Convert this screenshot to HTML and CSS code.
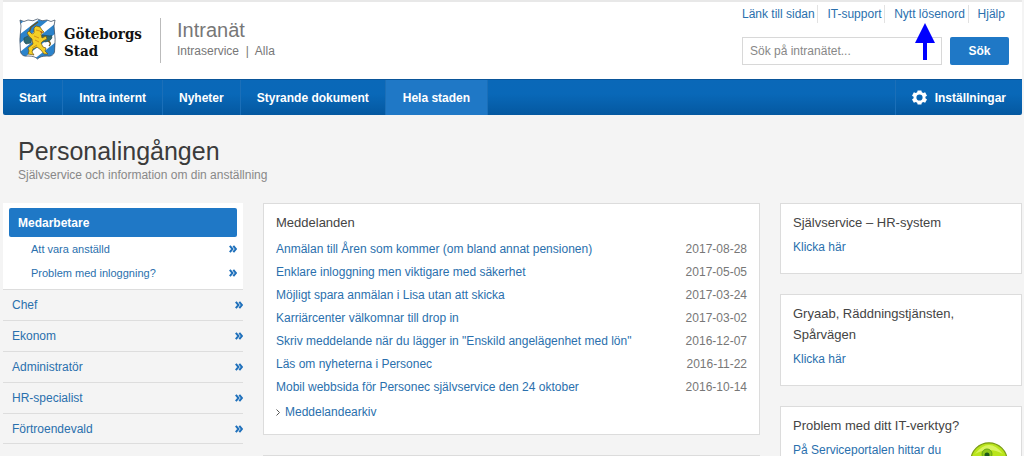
FILE: index.html
```html
<!DOCTYPE html>
<html lang="sv">
<head>
<meta charset="utf-8">
<meta name="viewport" content="width=device-width, initial-scale=1">
<title>Personalingången – Intranät</title>
<link rel="stylesheet" href="styles.css">
</head>
<body>
<div class="page">
  <header class="header">
    <div class="brand">
      <svg class="crest" viewBox="0 0 37 42" aria-hidden="true">
        <defs><clipPath id="shield"><path d="M1 2Q5 5 9 2Q14 4 18.500 1Q23 4 28 2Q32 5 36 2L35 8Q37 22 35.500 34Q34 39 28 38Q21 38 18.500 41Q16 38 9 38Q3 39 1.500 34Q0 22 2 8Z"/></clipPath></defs>
        <g clip-path="url(#shield)">
          <path fill="#fff" d="M0 0h37v42H0z"/>
          <path fill="#2b83cb" d="M0 0H9L0 7ZM0 17L22 0H32L0 26ZM37 5V15L2 42H-9ZM37 24V34L27 42H14Z"/>
        </g>
        <path fill="none" stroke="#44566b" stroke-width=".8" d="M1 2Q5 5 9 2Q14 4 18.500 1Q23 4 28 2Q32 5 36 2L35 8Q37 22 35.500 34Q34 39 28 38Q21 38 18.500 41Q16 38 9 38Q3 39 1.500 34Q0 22 2 8Z"/>
        <path fill="#2d6b74" stroke="#214654" stroke-width=".6" d="M23 17L31 18Q33 16 33 20Q31 24 26 24L22 22ZM5 20L9 18L13 21L12 25L7 26Q4 24 5 20Z"/>
        <path fill="none" stroke="#6b551b" stroke-width="1.400" d="M10 15L12 9L19 4M29 23Q33 25 30 28"/>
        <path fill="#f5cf25" stroke="#6f5512" stroke-width=".7" stroke-linejoin="round" d="M15 10L17 8L21 9L23 12L25 14L22 16L23 20L27 18L28 21L24 23L22 25L24 29L27 30L26 33L29 36L25 36L22 32L18 29L14 31L13 34L15 37L9 36L10 33L9 30L14 26L13 21L10 18L8 15L10 13L13 16L15 15Z"/>
        <path fill="none" stroke="#d39218" stroke-width="1" d="M15 18L20 20M16 22L20 24M17 12L21 13M13 30L18 27"/>
        <path fill="#9b2c1c" d="M21 13l3 1-2 1z"/>
      </svg>
      <span class="brand-name"><span>Göteborgs</span><span>Stad</span></span>
    </div>
    <div class="site">
      <div class="site-name">Intranät</div>
      <div class="site-unit">Intraservice&nbsp; |&nbsp; Alla</div>
    </div>
    <div class="tools">
      <ul class="quick-links">
        <li><a href="#">Länk till sidan</a></li>
        <li><a href="#">IT-support</a></li>
        <li class="marked"><a href="#">Nytt lösenord</a>
          <svg class="arrow" viewBox="0 0 20 37" aria-hidden="true"><path fill="#00f" d="M10 0L20 20H12V37H8V20H0Z"/></svg>
        </li>
        <li><a href="#">Hjälp</a></li>
      </ul>
      <form class="search">
        <input class="search-field" type="text" aria-label="Sök på intranätet" placeholder="Sök på intranätet...">
        <button class="search-button" type="button">Sök</button>
      </form>
    </div>
  </header>

  <nav class="nav">
    <a href="#">Start</a>
    <a href="#">Intra internt</a>
    <a href="#">Nyheter</a>
    <a href="#">Styrande dokument</a>
    <a class="active" href="#">Hela staden</a>
    <a class="settings" href="#">
      <svg class="gear" viewBox="0 0 16 16" aria-hidden="true"><path fill="#fff" fill-rule="evenodd" d="M6 0.500H10L10.500 2.500L12 3.200L14 2.500L16 6L14.300 7.200V8.800L16 10L14 13.500L12 12.800L10.500 13.500L10 15.500H6L5.500 13.500L4 12.800L2 13.500L0 10L1.700 8.800V7.200L0 6L2 2.500L4 3.200L5.500 2.500ZM8 4.700A3.300 3.300 0 1 0 8 11.300A3.300 3.300 0 1 0 8 4.700Z"/></svg>
      Inställningar
    </a>
  </nav>

  <div class="heading">
    <h1>Personalingången</h1>
    <p>Självservice och information om din anställning</p>
  </div>

  <main class="columns">
    <aside class="side">
      <div class="side-current">
        <a class="side-title" href="#">Medarbetare</a>
        <a class="side-sub" href="#">Att vara anställd<svg class="chev" viewBox="0 0 8 8" aria-hidden="true"><path d="M.8.800L3.500 4L.8 7.200M4.300.800L7 4L4.300 7.200"/></svg></a>
        <a class="side-sub" href="#">Problem med inloggning?<svg class="chev" viewBox="0 0 8 8" aria-hidden="true"><path d="M.8.800L3.500 4L.8 7.200M4.300.800L7 4L4.300 7.200"/></svg></a>
      </div>
      <a class="side-item" href="#">Chef<svg class="chev" viewBox="0 0 8 8" aria-hidden="true"><path d="M.8.800L3.500 4L.8 7.200M4.300.800L7 4L4.300 7.200"/></svg></a>
      <a class="side-item" href="#">Ekonom<svg class="chev" viewBox="0 0 8 8" aria-hidden="true"><path d="M.8.800L3.500 4L.8 7.200M4.300.800L7 4L4.300 7.200"/></svg></a>
      <a class="side-item" href="#">Administratör<svg class="chev" viewBox="0 0 8 8" aria-hidden="true"><path d="M.8.800L3.500 4L.8 7.200M4.300.800L7 4L4.300 7.200"/></svg></a>
      <a class="side-item" href="#">HR-specialist<svg class="chev" viewBox="0 0 8 8" aria-hidden="true"><path d="M.8.800L3.500 4L.8 7.200M4.300.800L7 4L4.300 7.200"/></svg></a>
      <a class="side-item" href="#">Förtroendevald<svg class="chev" viewBox="0 0 8 8" aria-hidden="true"><path d="M.8.800L3.500 4L.8 7.200M4.300.800L7 4L4.300 7.200"/></svg></a>
    </aside>

    <div class="stack">
      <section class="card">
        <h2>Meddelanden</h2>
        <ul class="messages">
          <li><a href="#">Anmälan till Åren som kommer (om bland annat pensionen)</a><time>2017-08-28</time></li>
          <li><a href="#">Enklare inloggning men viktigare med säkerhet</a><time>2017-05-05</time></li>
          <li><a href="#">Möjligt spara anmälan i Lisa utan att skicka</a><time>2017-03-24</time></li>
          <li><a href="#">Karriärcenter välkomnar till drop in</a><time>2017-03-02</time></li>
          <li><a href="#">Skriv meddelande när du lägger in "Enskild angelägenhet med lön"</a><time>2016-12-07</time></li>
          <li><a href="#">Läs om nyheterna i Personec</a><time>2016-11-22</time></li>
          <li><a href="#">Mobil webbsida för Personec självservice den 24 oktober</a><time>2016-10-14</time></li>
        </ul>
        <a class="archive" href="#"><svg class="caret" viewBox="0 0 4 7" aria-hidden="true"><path d="M.5.500L3.500 3.500L.5 6.500"/></svg>Meddelandearkiv</a>
      </section>
      <section class="card"></section>
    </div>

    <div class="stack">
      <section class="card">
        <h2>Självservice – HR-system</h2>
        <a class="card-link" href="#">Klicka här</a>
      </section>
      <section class="card">
        <h2>Gryaab, Räddningstjänsten, Spårvägen</h2>
        <a class="card-link" href="#">Klicka här</a>
      </section>
      <section class="card portal">
        <h2>Problem med ditt IT-verktyg?</h2>
        <a class="card-link" href="#">På Serviceportalen hittar du</a>
        <svg class="badge" viewBox="0 0 38 38" aria-hidden="true">
          <circle cx="19" cy="19" r="18.200" fill="#b9e51b" stroke="#7c9c17" stroke-width="1.200"/>
          <path d="M5 12Q19-6 33 12Q19 4 5 12Z" fill="#d9f45f"/>
          <circle cx="17" cy="12" r="5" fill="#8fc71a" stroke="#67a516"/>
          <circle cx="17" cy="13" r="2.500" fill="#1d5a1a"/>
          <path d="M13 28V20Q17 14 21 20V28Z" fill="#2f7a1e"/>
        </svg>
      </section>
    </div>
  </main>
</div>
</body>
</html>
```
FILE: styles.css
```css
* { box-sizing: border-box; }
body {
  margin: 0;
  background: #f4f4f4;
  color: #444;
  font-family: "Liberation Sans", Arial, sans-serif;
  font-size: 12px;
  line-height: 16px;
}
a { color: #2a70ad; text-decoration: none; }
h1, h2, p, ul { margin: 0; padding: 0; font-weight: normal; }
ul { list-style: none; }
.page { margin: 0 2px 0 3px; }

.header {
  display: flex;
  align-items: flex-start;
  padding: 0 13px 14px 16px;
  background: #fff;
  border-top: 2px solid #e8e8e8;
}
.brand { display: flex; gap: 8px; padding-top: 16px; width: 141px; }
.crest { width: 37px; height: 42px; flex: none; }
.brand-name {
  display: flex;
  flex-direction: column;
  padding-top: 8px;
  color: #111;
  font: bold 15px/17px "DejaVu Serif Condensed", "DejaVu Serif", serif;
}
.site {
  margin-top: 16px;
  padding: 0 0 3px 16px;
  border-left: 1px solid #bbb;
  color: #777;
}
.site-name { font-size: 20px; line-height: 24px; }
.site-unit { line-height: 18px; }
.tools { margin-left: auto; width: 267px; }
.quick-links { display: flex; justify-content: space-between; padding: 3px 4px 0 0; }
.quick-links li { line-height: 18px; }
.quick-links li + li { padding-left: 9px; border-left: 1px solid #e2e2e2; }
.marked { position: relative; }
.arrow { position: absolute; left: 30px; top: 18px; width: 20px; height: 37px; }
.search { display: flex; gap: 8px; margin-top: 14px; }
.search-field {
  flex: 1;
  min-width: 0;
  height: 28px;
  padding: 0 7px;
  border: 1px solid #d8d8d8;
  background: #fff;
  font: inherit;
}
.search-field::placeholder { color: #888; opacity: 1; }
.search-button {
  width: 59px;
  height: 28px;
  border: 0;
  border-radius: 2px;
  background: #1f78c6;
  color: #fff;
  font: inherit;
  font-weight: bold;
}

.nav {
  display: flex;
  height: 36px;
  border-top: 1px solid #0a5599;
  border-radius: 0 0 2px 2px;
  background: linear-gradient(#0a68b8, #0968b8 40%, #0458a0);
  font-weight: bold;
}
.nav a {
  display: flex;
  align-items: center;
  padding: 0 16px;
  border-right: 1px solid #1b6fb8;
  color: #fff;
}
.nav .active { padding: 0 17px; background: #1f78c6; }
.nav .settings {
  gap: 8px;
  margin-left: auto;
  border-right: 0;
  border-left: 1px solid #1b6fb8;
}
.gear { width: 15px; height: 15px; }

.heading { padding: 20px 15px; }
h1 { color: #3b3b3b; font-size: 25px; line-height: 32px; }
.heading p { color: #888; }

.columns {
  display: grid;
  grid-template-columns: 240px minmax(0, 1fr) 242px;
  gap: 20px;
  align-items: start;
}
.side-current { padding: 5px 6px 4px; background: #fff; }
.side a { display: flex; align-items: center; justify-content: space-between; }
.side .side-title {
  height: 29px;
  padding: 0 9px;
  border-radius: 2px;
  background: #1f78c6;
  color: #fff;
  font-weight: bold;
}
.side-sub { height: 24px; padding-left: 22px; font-size: 11px; }
.side-item { height: 31px; padding-left: 9px; border-top: 1px solid #ddd; }
.side-item:last-child { border-bottom: 1px solid #ddd; }
.chev { width: 8px; height: 8px; fill: none; stroke: #1f70bb; stroke-width: 2; }

.stack { display: grid; gap: 20px; }
.card {
  min-height: 60px;
  padding: 8px 12px 14px;
  border: 1px solid #dcdcdc;
  background: #fff;
}
h2 { font-size: 13px; line-height: 21px; }
.messages { padding-top: 5px; }
.messages li { display: flex; justify-content: space-between; line-height: 23px; }
.messages time { color: #777; }
.archive { display: flex; align-items: center; gap: 5px; padding: 5px 0 0; }
.caret { width: 4px; height: 7px; fill: none; stroke: #555; }
.card-link { display: block; margin-top: 6px; }
.stack:last-child .card { padding-bottom: 18px; }
.portal { position: relative; }
.badge { position: absolute; right: 13px; top: 35px; width: 38px; height: 38px; }
```
